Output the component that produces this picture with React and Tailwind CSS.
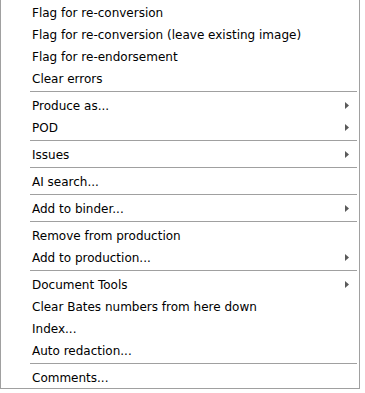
const items = [
  [{ label: 'Flag for re-conversion' }, { label: 'Flag for re-conversion (leave existing image)' }, { label: 'Flag for re-endorsement' }, { label: 'Clear errors' }],
  [{ label: 'Produce as...', sub: true }, { label: 'POD', sub: true }],
  [{ label: 'Issues', sub: true }],
  [{ label: 'AI search...' }],
  [{ label: 'Add to binder...', sub: true }],
  [{ label: 'Remove from production' }, { label: 'Add to production...', sub: true }],
  [{ label: 'Document Tools', sub: true }, { label: 'Clear Bates numbers from here down' }, { label: 'Index...' }, { label: 'Auto redaction...' }],
  [{ label: 'Comments...' }],
];

function Arrow() {
  return (
    <svg width="4" height="7" viewBox="0 0 4 7" className="mr-[10px]">
      <path d="M0 0 L4 3.5 L0 7 Z" fill="#5a5a5a" />
    </svg>
  );
}

export default function App() {
  return (
    <div className="bg-white w-[365px] h-[393px]">
      <div
        className="w-[360px] pt-[1px] border-x border-b border-[#a0a0a0] bg-white text-black text-[12px]"
        style={{ fontFamily: '"DejaVu Sans", Tahoma, sans-serif' }}
      >
        {items.map((group, gi) => (
          <div key={gi}>
            {gi > 0 && <div className="ml-[29px] mr-[2px] my-[2px] h-px bg-[#a0a0a0]" />}
            {group.map((it) => (
              <div key={it.label} className="h-[22px] flex items-center justify-between pl-[31px]">
                <span className="whitespace-nowrap relative top-[1px]">{it.label}</span>
                {it.sub && <Arrow />}
              </div>
            ))}
          </div>
        ))}
      </div>
    </div>
  );
}
